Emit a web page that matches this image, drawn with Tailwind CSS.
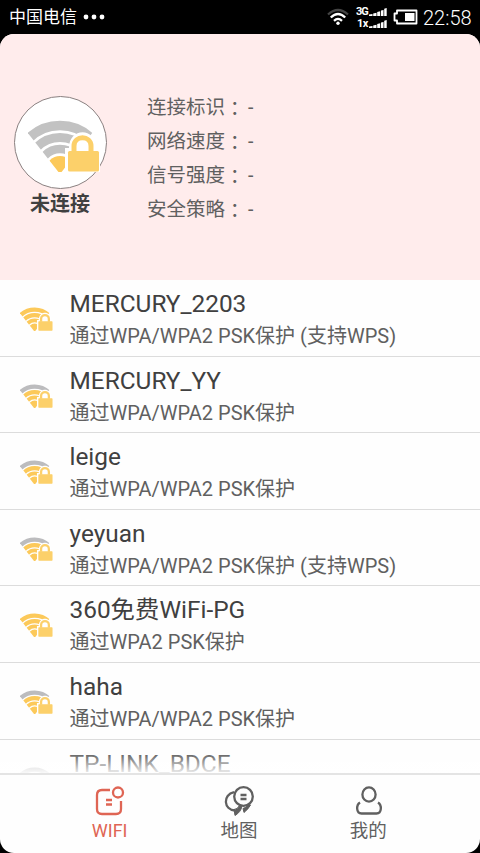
<!DOCTYPE html>
<html lang="zh-CN">
<head>
<meta charset="utf-8">
<title>WIFI</title>
<script src="https://cdn.jsdelivr.net/npm/@tailwindcss/browser@4"></script>
</head>
<body class="bg-black">
<svg class="absolute" width="0" height="0">
  <defs>
    <clipPath id="wedge"><path d="M-1 14L32 56L65 14V0H-1Z"/></clipPath>
    <symbol id="fan" viewBox="0 0 72 54">
      <g fill="none" clip-path="url(#wedge)">
        <circle stroke="var(--top)" stroke-width="9.500" cx="32" cy="52" r="44.500"/>
        <circle stroke="var(--mid)" stroke-width="9" cx="32" cy="52" r="32.500"/>
        <circle stroke="var(--mid)" stroke-width="8.500" cx="32" cy="52" r="21"/>
        <circle fill="#fcc95a" cx="32" cy="52" r="14"/>
      </g>
      <path fill="#fff" d="M37 30h4c0-21 27-21 27 0h5v25H37Z"/>
      <path fill="none" stroke="#fcd06a" stroke-width="5" d="M46 34v-6c0-11 17-11 17 0v6"/>
      <rect x="40" y="33" width="31" height="20.500" rx="1.500" fill="#fcd06a"/>
    </symbol>
    <symbol id="bars" viewBox="0 0 18 8"><path fill="#fff" d="M0 8V6.500L3.500 6V8ZM4.200 8V5.500l3.300-.7V8ZM8.200 8V4l3-.8V8ZM12 8V2.500l2.500-.6V8ZM15.200 8V.8l2.500-.8V8Z"/></symbol>
  </defs>
</svg>
<div class="w-[480px] h-[853px] flex flex-col overflow-hidden bg-black font-[Roboto,'Noto_Sans_CJK_SC',sans-serif] text-[#606060]">
  <header class="h-[34px] shrink-0 flex items-center pl-[9px] pr-[8px] text-white">
    <span class="text-[17px] leading-[34px]">中国电信</span>
    <svg class="ml-[6px]" width="22" height="6"><g fill="#fff"><circle cx="3" cy="3" r="2.400"/><circle cx="11" cy="3" r="2.400"/><circle cx="19" cy="3" r="2.400"/></g></svg>
    <span class="flex-1"></span>
    <svg width="22" height="18" viewBox="0 0 22 18" fill="none" stroke-width="2.300"><path stroke="#444" d="M1 6.500Q11-2.500 21 6.500"/><path stroke="#fff" d="M3.800 9.500Q11 2.500 18.200 9.500M7 12.800Q11 9 15 12.800"/><circle cx="11" cy="15.300" r="1.700" fill="#fff"/></svg>
    <div class="ml-[7px] w-[31px] flex flex-col gap-[3px] font-bold text-[11px] leading-[9px]">
      <div class="flex justify-between items-end h-[9px]"><span class="tracking-[-1px] w-[12px]">3G</span><svg width="18" height="8"><use href="#bars"/></svg></div>
      <div class="flex justify-between items-end h-[9px]"><span class="tracking-[-.5px] w-[12px] pl-[1px]">1x</span><svg width="18" height="8"><use href="#bars"/></svg></div>
    </div>
    <svg class="ml-[6px]" width="25" height="16" viewBox="0 0 25 16"><path fill="none" stroke="#fff" stroke-width="1.800" stroke-linejoin="round" d="M4 1.500h19.500v13H4V11.500H1.500v-7H4Z"/><path fill="#fff" d="M12 4h9.500v8H12Z"/></svg>
    <span class="ml-[5px] pt-[3px] text-[20px] leading-[31px] w-[49px] whitespace-nowrap font-light">22:58</span>
  </header>
  <div class="flex-1 min-h-0 flex flex-col rounded-[14px] overflow-hidden bg-[#fefefe]">
    <section class="h-[246px] shrink-0 bg-[#ffecec] flex">
      <div class="w-[120px] pt-[62px] flex flex-col items-center">
        <div class="w-[93px] h-[93px] rounded-full border border-[#8a8080] bg-white flex items-center justify-center pl-[7px] pt-[4px]">
          <svg class="shrink-0 [--top:#c2c2c2] [--mid:#c2c2c2]" width="72" height="54"><use href="#fan"/></svg>
        </div>
        <span class="mt-px text-[20px] leading-[28px] font-bold text-[#404040]">未连接</span>
      </div>
      <div class="ml-[27px] pt-[57px] text-[19.500px] leading-[34px] whitespace-nowrap">
        <div class="flex h-[34px]"><span class="w-[78px]">连接标识</span><span lang="zh-TW" class="w-[23px] font-['Noto_Sans_CJK_TC']">：</span>-</div>
        <div class="flex h-[34px]"><span class="w-[78px]">网络速度</span><span lang="zh-TW" class="w-[23px] font-['Noto_Sans_CJK_TC']">：</span>-</div>
        <div class="flex h-[34px]"><span class="w-[78px]">信号强度</span><span lang="zh-TW" class="w-[23px] font-['Noto_Sans_CJK_TC']">：</span>-</div>
        <div class="flex h-[34px]"><span class="w-[78px]">安全策略</span><span lang="zh-TW" class="w-[23px] font-['Noto_Sans_CJK_TC']">：</span>-</div>
      </div>
    </section>
    <main class="relative flex-1 min-h-0 overflow-hidden whitespace-nowrap" id="networks">
      <div class="absolute bottom-0 inset-x-0 h-[24px] bg-linear-to-b from-white/0 to-white/90 z-10"></div>
    </main>
    <nav class="h-[80px] shrink-0 border-t-2 border-[#e4e4e4] flex pl-[45px] pr-[47px] text-[18.500px] leading-[26px]">
      <div class="flex-1 flex flex-col items-center pt-[10px] text-[#df6554]">
        <svg width="32" height="32" viewBox="0 0 32 32" fill="none" stroke="currentColor" stroke-width="2.300"><path d="M16 5H8Q3 5 3 10v14q0 5 5 5h14q5 0 5-5v-8"/><circle cx="24" cy="7.500" r="5"/><path d="M12 15h6M12 19.500h6"/></svg>
        <span class="text-[18px] mt-px">WIFI</span>
      </div>
      <div class="flex-1 flex flex-col items-center pt-[10px]">
        <svg width="32" height="32" viewBox="0 0 32 32" fill="none" stroke="currentColor" stroke-width="2.300"><circle cx="20.500" cy="11.500" r="9.300"/><path d="M11 7.200C-.5 9.500.5 25 12 25.500M17.500 10h6M17.500 14h6"/><path fill="currentColor" stroke-width="1" d="M11 24.500q3 .2 6-4.500l2 1q-1 6-7 9.500ZM20 23.500q3-.5 5.500-4l2 .5q-2 4-6.500 7.500Z"/></svg>
        <span class="mt-px">地图</span>
      </div>
      <div class="flex-1 flex flex-col items-center pt-[10px]">
        <svg width="32" height="32" viewBox="0 0 32 32" fill="none" stroke="currentColor" stroke-width="2.300"><ellipse cx="17" cy="9.500" rx="6.600" ry="7.200"/><path d="M8 17.500C4 20 4 28.500 9.500 28.500h15c5.500 0 5.500-8.500 1.500-11"/></svg>
        <span class="mt-px">我的</span>
      </div>
    </nav>
  </div>
</div>
<template id="row">
  <div class="h-[76.600px] border-b-[1.500px] border-[#dcdcdc] flex pl-[20px]">
    <svg class="mt-[26px] shrink-0" width="33" height="25"><use href="#fan"/></svg>
    <div class="ml-[16.500px] pt-[7px]">
      <div class="name text-[24.400px] leading-[34px] text-[#404040]"></div>
      <div class="info text-[20px] leading-[30px]"></div>
    </div>
  </div>
</template>
<script>
const networks = [
  ['MERCURY_2203', '通过WPA/WPA2 PSK保护 (支持WPS)', '#fcc95a'],
  ['MERCURY_YY', '通过WPA/WPA2 PSK保护', '#bcbcbe'],
  ['leige', '通过WPA/WPA2 PSK保护', '#bcbcbe'],
  ['yeyuan', '通过WPA/WPA2 PSK保护 (支持WPS)', '#bcbcbe'],
  ['360免费WiFi-PG', '通过WPA2 PSK保护', '#fcc95a'],
  ['haha', '通过WPA/WPA2 PSK保护', '#bcbcbe'],
  ['TP-LINK_BDCE', '', '#bcbcbe'],
];
for (const [name, info, top] of networks) {
  const row = document.getElementById('row').content.cloneNode(true);
  row.querySelector('.name').textContent = name;
  row.querySelector('.info').textContent = info;
  const icon = row.querySelector('svg');
  icon.style.setProperty('--top', top);
  icon.style.setProperty('--mid', '#fcc95a');
  document.getElementById('networks').append(row);
}
</script>
</body>
</html>
